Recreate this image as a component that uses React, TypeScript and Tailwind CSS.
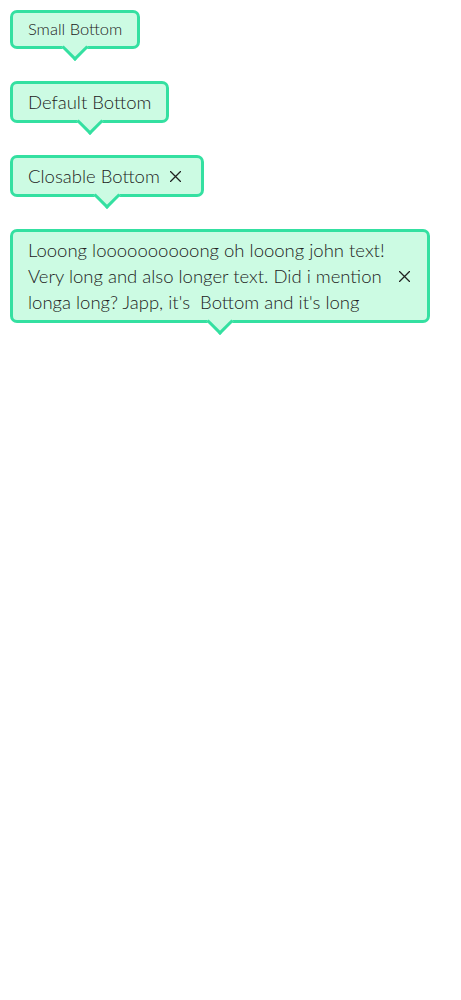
import React from 'react'

type Size = 'small' | 'default'

interface TooltipProps {
  children: React.ReactNode
  size?: Size
  closable?: boolean
  className?: string
}

function CloseIcon() {
  return (
    <svg width="11" height="11" viewBox="0 0 11 11" className="shrink-0 text-[#222]">
      <path d="M0.5 0.5 L10.5 10.5 M10.5 0.5 L0.5 10.5" stroke="currentColor" strokeWidth="1.3" strokeLinecap="round" />
    </svg>
  )
}

function Tooltip({ children, size = 'default', closable = false, className = '' }: TooltipProps) {
  const text = size === 'small' ? 'text-[16.5px] leading-[21px] py-1.5' : 'text-[18.5px] leading-[26px] py-[5px]'
  return (
    <div
      className={`relative flex items-center rounded-[7px] border-[3px] border-[#34e0a1] bg-[#ccfbe3] pl-[15px] ${
        closable ? '' : 'pr-[15px]'
      } ${className}`}
    >
      <span className={`relative z-10 font-light text-[#222] ${text}`}>{children}</span>
      {closable && (
        <span className="relative z-10 ml-[10px] flex items-center">
          <CloseIcon />
        </span>
      )}
      {/* arrow */}
      <span className="absolute bottom-[-11px] left-1/2 h-[19px] w-[19px] -translate-x-1/2 rotate-45 border-r-[3px] border-b-[3px] border-[#34e0a1] bg-[#ccfbe3]" />
    </div>
  )
}

export default function App() {
  return (
    <div className="min-h-screen bg-white px-[10px] pt-[10px]" style={{ fontFamily: 'Lato, "Noto Sans", sans-serif' }}>
      <div className="flex flex-col items-start gap-8">
        <Tooltip size="small">Small Bottom</Tooltip>
        <Tooltip>Default Bottom</Tooltip>
        <Tooltip closable className="pr-[20px]">
          Closable Bottom
        </Tooltip>
        <Tooltip closable className="w-[420px] pr-[17px]">
          Looong loooooooooong oh looong john text! Very long and also longer text. Did i mention longa long? Japp,
          {" it's\u00a0 Bottom and it's long"}
        </Tooltip>
      </div>
    </div>
  )
}
